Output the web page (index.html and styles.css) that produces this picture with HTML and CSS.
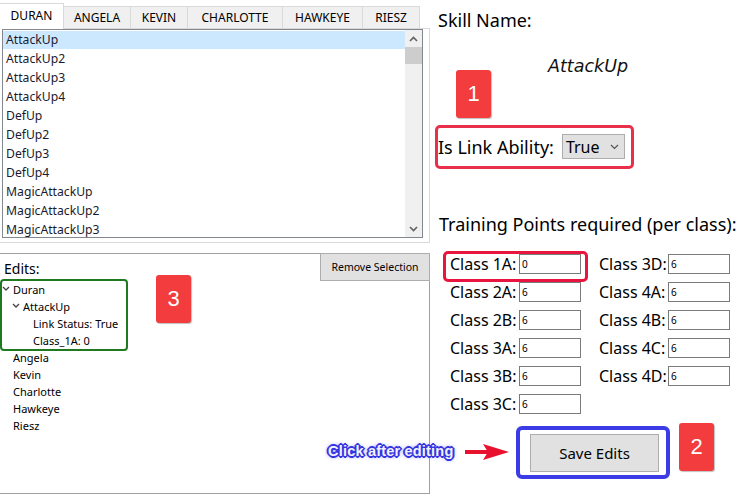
FILE: index.html
```html
<!DOCTYPE html>
<html>
<head>
<meta charset="utf-8">
<title>Skill Editor</title>
<link rel="stylesheet" href="styles.css">
</head>
<body>
<div class="app">
  <section class="left">
    <div class="tabs">
      <div class="tab active">DURAN</div>
      <div class="tab">ANGELA</div>
      <div class="tab">KEVIN</div>
      <div class="tab">CHARLOTTE</div>
      <div class="tab">HAWKEYE</div>
      <div class="tab">RIESZ</div>
    </div>
    <div class="tabpage">
      <div class="listbox">
        <ul class="items">
          <li class="sel">AttackUp</li>
          <li>AttackUp2</li>
          <li>AttackUp3</li>
          <li>AttackUp4</li>
          <li>DefUp</li>
          <li>DefUp2</li>
          <li>DefUp3</li>
          <li>DefUp4</li>
          <li>MagicAttackUp</li>
          <li>MagicAttackUp2</li>
          <li>MagicAttackUp3</li>
        </ul>
        <div class="vscroll">
          <div class="sarrow"><svg width="9" height="6" viewBox="0 0 9 6"><path d="M1 5 L4.5 1.5 L8 5" fill="none" stroke="#606060" stroke-width="1.6"/></svg></div>
          <div class="thumb"></div>
          <div class="track"></div>
          <div class="sarrow"><svg width="9" height="6" viewBox="0 0 9 6"><path d="M1 1 L4.5 4.5 L8 1" fill="none" stroke="#606060" stroke-width="1.6"/></svg></div>
        </div>
      </div>
    </div>
    <div class="edits">
      <div class="edits-head">
        <span class="edits-label">Edits:</span>
        <button class="btn btn-remove">Remove Selection</button>
      </div>
      <ul class="tree">
        <li class="node lv0"><svg class="chev" width="8" height="5" viewBox="0 0 8 5"><path d="M1 1 L4 4 L7 1" fill="none" stroke="#444" stroke-width="1.3"/></svg>Duran</li>
        <li class="node lv1"><svg class="chev" width="8" height="5" viewBox="0 0 8 5"><path d="M1 1 L4 4 L7 1" fill="none" stroke="#444" stroke-width="1.3"/></svg>AttackUp</li>
        <li class="node lv2">Link Status: True</li>
        <li class="node lv2">Class_1A: 0</li>
        <li class="node leaf">Angela</li>
        <li class="node leaf">Kevin</li>
        <li class="node leaf">Charlotte</li>
        <li class="node leaf">Hawkeye</li>
        <li class="node leaf">Riesz</li>
      </ul>
    </div>
  </section>

  <section class="right">
    <div class="skill-label">Skill Name:</div>
    <div class="skill-name">AttackUp</div>
    <div class="link-row">
      <span class="link-label">Is Link Ability:</span>
      <div class="select"><span>True</span><svg width="9" height="6" viewBox="0 0 9 6"><path d="M1 1 L4.5 4.5 L8 1" fill="none" stroke="#555" stroke-width="1.2"/></svg></div>
    </div>
    <div class="tp-label">Training Points required (per class):</div>
    <div class="classes">
      <div class="field"><label>Class 1A:</label><input type="text" value="0"></div>
      <div class="field"><label>Class 2A:</label><input type="text" value="6"></div>
      <div class="field"><label>Class 2B:</label><input type="text" value="6"></div>
      <div class="field"><label>Class 3A:</label><input type="text" value="6"></div>
      <div class="field"><label>Class 3B:</label><input type="text" value="6"></div>
      <div class="field"><label>Class 3C:</label><input type="text" value="6"></div>
      <div class="field"><label>Class 3D:</label><input type="text" value="6"></div>
      <div class="field"><label>Class 4A:</label><input type="text" value="6"></div>
      <div class="field"><label>Class 4B:</label><input type="text" value="6"></div>
      <div class="field"><label>Class 4C:</label><input type="text" value="6"></div>
      <div class="field"><label>Class 4D:</label><input type="text" value="6"></div>
    </div>
    <div class="save-row"><button class="btn btn-save">Save Edits</button></div>
  </section>

  <!-- annotations drawn over the UI -->
  <div class="hl hl-green"></div>
  <div class="hl hl-link"></div>
  <div class="hl hl-class"></div>
  <div class="hl hl-save"></div>
  <div class="badge badge-1">1</div>
  <div class="badge badge-2">2</div>
  <div class="badge badge-3">3</div>
  <div class="callout">Click after editing</div>
  <svg class="arrow" width="45" height="16" viewBox="0 0 45 16"><path d="M0 6 L24 6 L24 10 L0 10 Z" fill="#e8122e"/><path d="M18 0 L44 8 L18 16 L23 8 Z" fill="#e8122e"/></svg>
</div>
</body>
</html>
```

FILE: styles.css
```css
* { box-sizing: border-box; }
html, body { margin: 0; padding: 0; background: #fff; }
body { font-family: "Noto Sans", "DejaVu Sans", sans-serif; color: #000; }

.app { position: relative; width: 737px; height: 499px; display: flex; overflow: hidden; }

/* ---------- left column ---------- */
.left { width: 430px; flex: none; padding-top: 3px; display: flex; flex-direction: column; }

.tabs { display: flex; align-items: flex-end; height: 26px; position: relative; z-index: 1; }
.tab {
  height: 23px; padding: 0; background: #f0f0f0; text-align: center;
  border: 1px solid #d9d9d9; border-left: none;
  font-size: 12px; line-height: 21px; color: #000;
}
.tab:nth-child(1) { width: 64px; }
.tab:nth-child(2) { width: 67px; }
.tab:nth-child(3) { width: 57px; }
.tab:nth-child(4) { width: 95px; }
.tab:nth-child(5) { width: 80px; }
.tab:nth-child(6) { width: 57px; }
.tab.active { height: 26px; background: #fff; border-bottom: none; line-height: 24px; }

.tabpage {
  margin-top: -1px; height: 215px; border: 1px solid #d9d9d9; border-left: none;
  background: #fff; padding: 0 6px 4px 2px;
}
.listbox { height: 209px; border: 1px solid #828790; display: flex; background: #fff; }
.items { flex: 1; list-style: none; margin: 0; padding: 1px 0 0 0; overflow: hidden; font-size: 12.2px; }
.items li { height: 19px; line-height: 18px; padding-left: 3px; color: #1a1a2e; white-space: nowrap; }
.items li.sel { background: #cce8ff; height: 18px; margin-bottom: 1px; }
.vscroll { width: 17px; background: #f0f0f0; display: flex; flex-direction: column; }
.sarrow { height: 17px; display: flex; align-items: center; justify-content: center; }
.thumb { height: 17px; background: #cdcdcd; }
.track { flex: 1; }

.edits { margin-top: 10px; height: 241px; border: 1px solid #a0a0a0; border-left: none; }
.edits-head { display: flex; justify-content: space-between; align-items: flex-start; height: 27px; }
.edits-label { font-size: 14px; line-height: 20px; margin: 5px 0 0 4px; }
.btn { font-family: inherit; background: #e1e1e1; border: 1px solid #adadad; color: #000; padding: 0; cursor: default; }
.btn-remove { width: 110px; height: 28px; margin: -1px -1px 0 0; font-size: 10.5px; }

.tree { list-style: none; margin: 0; padding: 0; font-size: 11px; }
.node { height: 17px; line-height: 17px; display: flex; align-items: center; white-space: nowrap; }
.chev { flex: none; margin-right: 3px; margin-top: -3px; }
.lv0 { padding-left: 2px; }
.lv1 { padding-left: 12px; }
.lv2 { padding-left: 33px; }
.leaf { padding-left: 13px; }

/* ---------- right column ---------- */
.right { flex: 1; display: flex; flex-direction: column; }
.skill-label { margin: 7px 0 0 8px; font-size: 18px; line-height: 26px; }
.skill-name {
  margin: 21px 0 0 118px; font-family: "DejaVu Sans", sans-serif; font-style: italic;
  font-size: 17.5px; line-height: 24px; color: #111;
}
.link-row { display: flex; align-items: center; height: 25px; margin: 56px 0 0 8px; }
.link-label { font-size: 18px; }
.select {
  width: 63px; height: 25px; margin-left: 8px; background: #e1e1e1; border: 1px solid #adadad;
  display: flex; align-items: center; justify-content: space-between; padding: 0 5px 0 3px;
  font-size: 16px;
}
.tp-label { margin: 52px 0 0 9px; font-size: 18px; line-height: 26px; white-space: nowrap; }

.classes {
  margin: 17px 0 0 20px; display: grid; grid-auto-flow: column;
  grid-template-rows: repeat(6, 20px); grid-template-columns: 149px auto; row-gap: 8px;
}
.field { display: flex; align-items: center; }
.field label { width: 69px; font-size: 16px; white-space: nowrap; }
.field input {
  width: 62px; height: 20px; border: 1px solid #7a7a7a; padding: 0 2px; margin: 0;
  font-family: inherit; font-size: 10px; color: #000; background: #fff;
}

.save-row { margin: 20px 0 0 100px; }
.btn-save { width: 129px; height: 38px; font-size: 15px; }

/* ---------- annotations ---------- */
.hl { position: absolute; pointer-events: none; }
.hl-green { left: 0; top: 279px; width: 128px; height: 72px; border: 2px solid #1f7a1f; border-radius: 4px; }
.hl-link { left: 435px; top: 125px; width: 199px; height: 44px; border: 3px solid #e8304a; border-radius: 5px; }
.hl-class { left: 443px; top: 251px; width: 145px; height: 31px; border: 3px solid #e8163e; border-radius: 5px; }
.hl-save { left: 516px; top: 426px; width: 154px; height: 53px; border: 4px solid #3c3ce6; border-radius: 6px; }

.badge {
  position: absolute; width: 35px; height: 48px; background: #f23c3e; color: #fff;
  font-family: "Liberation Sans", Arial, sans-serif; font-size: 22px;
  display: flex; align-items: center; justify-content: center;
  border-radius: 3px; box-shadow: 1px 1px 1px rgba(0,0,0,0.25);
}
.badge-1 { left: 456px; top: 70px; }
.badge-2 { left: 679px; top: 423px; }
.badge-3 { left: 156px; top: 275px; }

.callout {
  position: absolute; left: 328px; top: 441px;
  font-family: "Liberation Sans", Arial, sans-serif; font-weight: bold; font-size: 14.5px;
  line-height: 20px; color: #f2f2ff; white-space: nowrap; letter-spacing: 0.2px;
  text-shadow:
    1px 0 0 #3535e0, -1px 0 0 #3535e0, 0 1px 0 #3535e0, 0 -1px 0 #3535e0,
    1px 1px 0 #3535e0, -1px -1px 0 #3535e0, 1px -1px 0 #3535e0, -1px 1px 0 #3535e0,
    2px 0 0 #3535e0, -2px 0 0 #3535e0, 0 2px 0 #3535e0, 0 -2px 0 #3535e0,
    0 0 4px #7b7bff, 0 0 5px #9a9aff;
}
.arrow { position: absolute; left: 465px; top: 444px; }
```
